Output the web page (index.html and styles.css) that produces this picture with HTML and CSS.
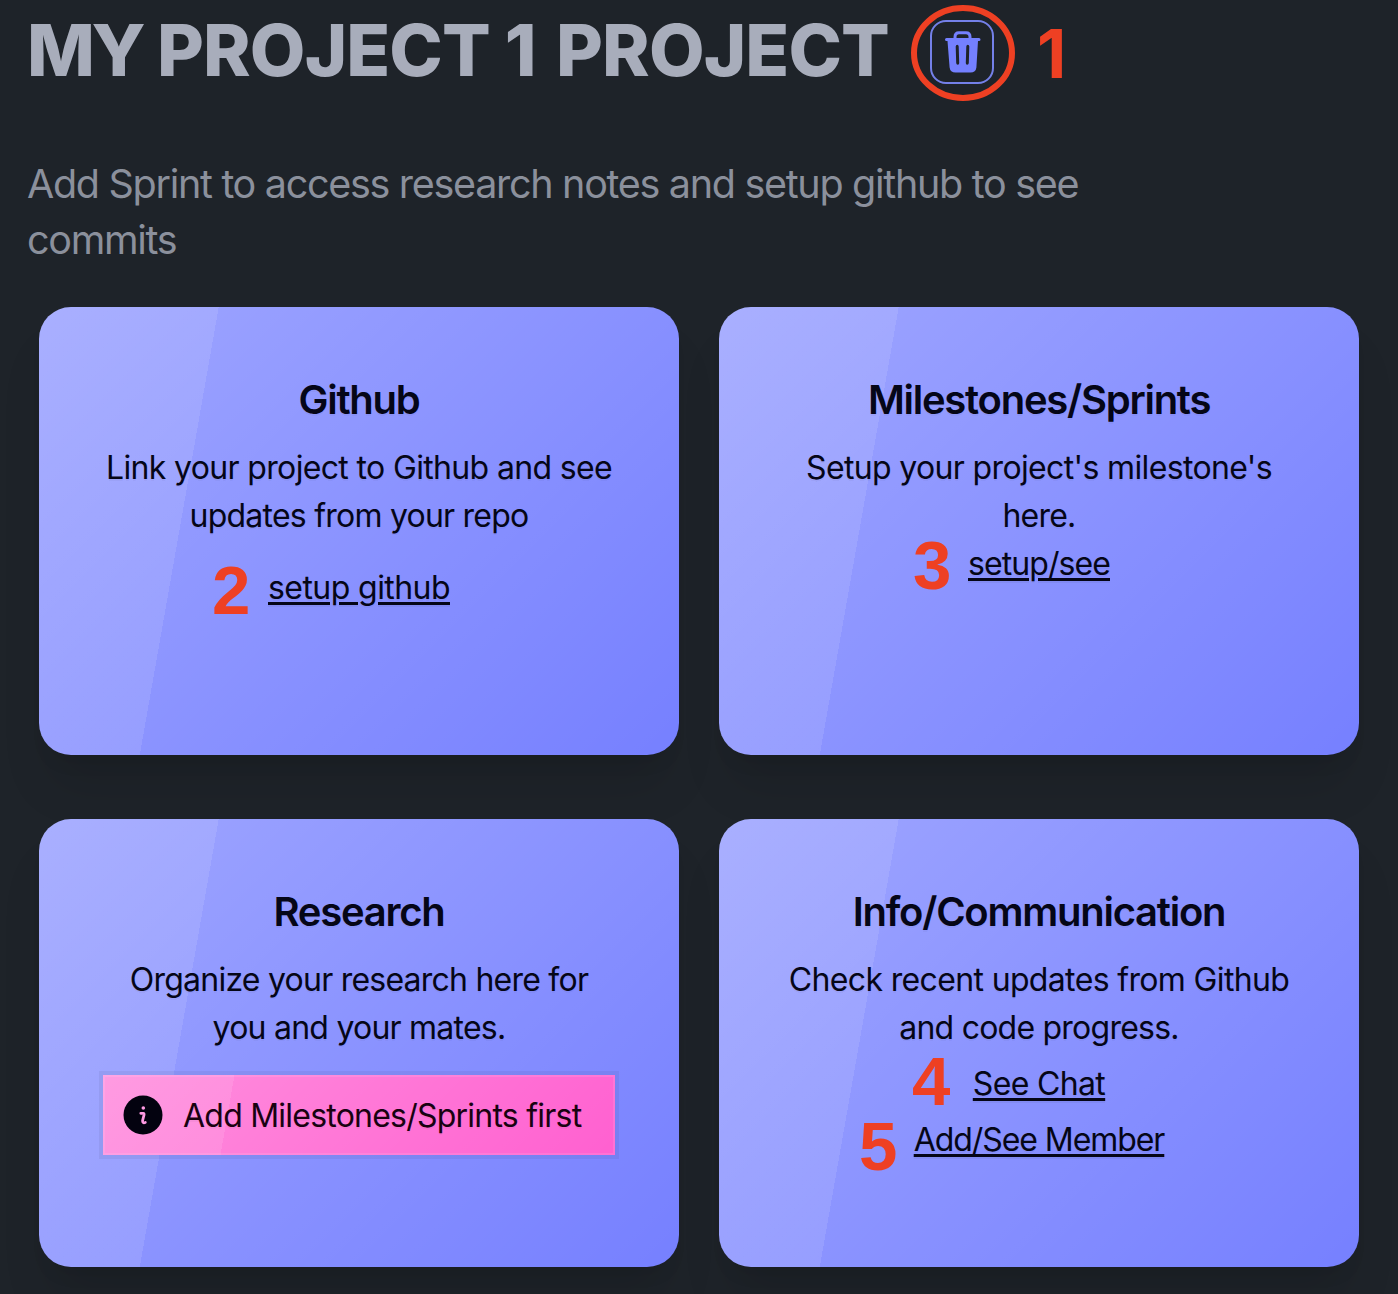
FILE: index.html
```html
<!DOCTYPE html>
<html lang="en">
<head>
<meta charset="utf-8">
<title>My Project 1</title>
<link rel="stylesheet" href="styles.css">
</head>
<body>
<main class="page">
  <header class="page-header">
    <h1 class="page-title"><span class="title-lead">MY</span> PROJECT <span class="title-number">1</span> PROJECT</h1>
    <div class="delete">
      <button class="delete-button" aria-label="Delete project">
        <svg class="trash-icon" viewBox="0 0 36 42">
          <path d="M10 7.500V6Q10 1.800 14 1.800H21Q25 1.800 25 6V7.500" fill="none" stroke="currentColor" stroke-width="3"/>
          <path fill="currentColor" fill-rule="evenodd" d="M1.500 7H34Q35.500 7 35.500 8.500T34 10H33L31.400 36.500Q30.800 41.500 25.500 41.500H10.500Q5.200 41.500 4.600 36.500L2.500 10H1.500Q0 10 0 8.500T1.500 7ZM10.700 15.500 11.200 32Q11.300 33.800 12.800 33.800T14.200 32L13.700 15.500Q13.600 13.800 12.200 13.800T10.700 15.500ZM24.300 15.500 23.800 32Q23.700 33.800 22.200 33.800T20.800 32L21.300 15.500Q21.400 13.800 22.800 13.800T24.300 15.500Z"/>
        </svg>
      </button>
      <svg class="callout-ring" viewBox="0 0 104 96"><ellipse cx="52" cy="48" rx="49" ry="45"/></svg>
      <span class="callout callout-1">1</span>
    </div>
  </header>
  <p class="intro">Add Sprint to access research notes and setup github to see commits</p>
  <section class="cards">
    <article class="card">
      <h2 class="card-title">Github</h2>
      <p class="card-text"><span>Link your project to Github and see</span><span class="snug">updates from your repo</span></p>
      <a class="card-link link-github">setup github</a>
      <span class="callout callout-2">2</span>
    </article>
    <article class="card">
      <h2 class="card-title">Milestones/Sprints</h2>
      <p class="card-text"><span>Setup your project's milestone's</span><span class="snug">here.</span></p>
      <a class="card-link link-milestones">setup/see</a>
      <span class="callout callout-3">3</span>
    </article>
    <article class="card">
      <h2 class="card-title">Research</h2>
      <p class="card-text"><span class="snug">Organize your research here for</span><span class="snug">you and your mates.</span></p>
      <div class="alert">
        <svg class="info-icon" viewBox="0 0 40 40">
          <circle cx="20" cy="20" r="19.500" fill="#03020f"/>
          <circle cx="20.300" cy="13" r="1.800" fill="#ff9ae3"/>
          <path d="M17.800 18.300H20.300Q21.300 18.300 21 20L19.600 25.500Q19.300 28.500 22.300 27.500" fill="none" stroke="#ff9ae3" stroke-width="2.800" stroke-linecap="round" stroke-linejoin="round"/>
        </svg>
        <span class="alert-text snug">Add Milestones/Sprints first</span>
      </div>
    </article>
    <article class="card">
      <h2 class="card-title">Info/Communication</h2>
      <p class="card-text"><span>Check recent updates from Github</span><span class="snug">and code progress.</span></p>
      <a class="card-link link-chat">See Chat</a>
      <a class="card-link link-member">Add/See Member</a>
      <span class="callout callout-4">4</span>
      <span class="callout callout-5">5</span>
    </article>
  </section>
</main>
</body>
</html>
```
FILE: styles.css
```css
* { box-sizing: border-box; margin: 0; }

body {
  background: #1e2329;
  color: #a6adbb;
  font-family: Inter, "Liberation Sans", sans-serif;
  overflow: hidden;
}

.page { padding: 12px 27px 27px; }

.page-header { display: flex; align-items: flex-start; gap: 40px; height: 144px; }

.page-title {
  width: 863px;
  margin-top: -2px;
  font-size: 72px;
  line-height: 80px;
  font-weight: 800;
  letter-spacing: -0.85px;
  white-space: nowrap;
  color: #a8adbb;
}

.title-lead { letter-spacing: -3.5px; }
.title-number { letter-spacing: 4.5px; }

.delete { position: relative; margin-top: 8px; width: 64px; height: 64px; }

.delete-button {
  display: flex;
  align-items: flex-start;
  width: 64px;
  height: 64px;
  padding: 9px 0 0 12.5px;
  border: 2px solid #7480e8;
  border-radius: 16px;
  background: none;
  color: #7480ff;
}

.trash-icon { flex: none; width: 36px; height: 42px; }

.callout-ring {
  position: absolute;
  left: -19px;
  top: -15px;
  width: 104px;
  height: 96px;
  fill: none;
  stroke: #ee4023;
  stroke-width: 6;
}

.intro {
  width: 1100px;
  font-size: 39.5px;
  line-height: 56px;
  font-weight: 430;
  letter-spacing: -1.3px;
  color: #8b909c;
}

.cards {
  display: grid;
  grid-template-columns: 640px 640px;
  gap: 64px 40px;
  padding: 39px 12px 0;
}

.card {
  position: relative;
  display: flex;
  flex-direction: column;
  align-items: center;
  height: 448px;
  padding: 65px 64px 63px;
  border-radius: 32px;
  background:
    linear-gradient(135deg, rgba(255, 255, 255, 0.3), transparent),
    linear-gradient(100deg, rgba(255, 255, 255, 0.1) 25%, transparent 25%),
    #7680ff;
  box-shadow: 0 40px 50px -10px rgba(0, 0, 0, 0.1), 0 16px 20px -12px rgba(0, 0, 0, 0.1);
  color: #050617;
  text-align: center;
  text-shadow: 0 2px rgba(0, 0, 0, 0.05);
}

.card-title {
  margin-bottom: 16px;
  font-size: 40px;
  line-height: 56px;
  font-weight: 600;
  letter-spacing: -1.25px;
}

.card-text,
.card-link,
.alert-text {
  font-size: 32px;
  line-height: 48px;
  letter-spacing: -0.65px;
  white-space: nowrap;
}

.card-text span { display: block; }
.card-text .snug,
.alert-text.snug { letter-spacing: -0.77px; }

.card-link { text-decoration: underline; text-decoration-thickness: 3px; text-underline-offset: 3px; }
.link-github { margin-top: 24px; letter-spacing: -0.57px; }
.link-milestones { letter-spacing: -0.92px; }
.link-chat { margin-top: 8px; }
.link-member { margin-top: 8px; letter-spacing: -1.07px; }

.alert {
  display: flex;
  align-items: center;
  gap: 20px;
  width: 512px;
  height: 80px;
  margin-top: 23px;
  padding: 0 20px;
  background:
    linear-gradient(135deg, rgba(255, 255, 255, 0.3), transparent),
    linear-gradient(100deg, rgba(255, 255, 255, 0.1) 25%, transparent 25%),
    #ff60d0;
  box-shadow: 0 0 0 2px rgba(255, 255, 255, 0.1) inset, 0 0 0 4px rgba(0, 0, 0, 0.05);
  color: #190211;
}

.alert-text { padding-top: 2px; }

.info-icon { width: 40px; height: 40px; }

.callout {
  position: absolute;
  font: 700 69px/68px "Liberation Sans", sans-serif;
  color: #ee4023;
  text-shadow: none;
}
.callout-1 { left: 107px; top: -1px; font-family: Inter, sans-serif; font-size: 68px; }
.callout-2 { left: 173px; top: 250px; }
.callout-3 { left: 194px; top: 225px; }
.callout-4 { left: 193px; top: 229px; }
.callout-5 { left: 140px; top: 294px; }
```
